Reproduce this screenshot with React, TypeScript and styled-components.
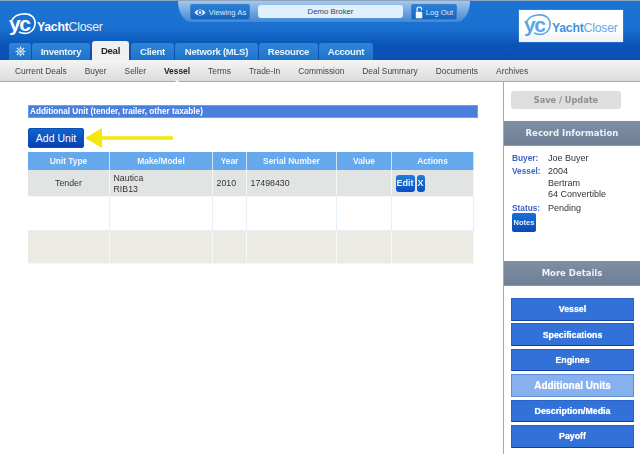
import React from "react";
import styled, { createGlobalStyle } from "styled-components";

const Global = createGlobalStyle`
  html, body { margin: 0; padding: 0; background: #fff; }
  body { font-family: "Liberation Sans", Arial, sans-serif; color: #333; }
  * { box-sizing: border-box; }
`;

const Page = styled.div`
  width: 640px;
  height: 454px;
  overflow: hidden;
  display: flex;
  flex-direction: column;
  filter: blur(0.35px);
`;

const Header = styled.header`
  height: 60px;
  flex: none;
  display: flex;
  flex-direction: column;
  border-top: 1px solid #8fa3bd;
  background: linear-gradient(#1a74d4 0%, #1a70d0 45%, #0a54b8 75%, #0a4fb2 100%);
`;

const TopRow = styled.div`
  height: 42px;
  flex: none;
  display: flex;
  align-items: flex-start;
`;

const LogoBox = styled.div<{ $boxed?: boolean }>`
  display: flex;
  align-items: center;
  color: ${(p) => (p.$boxed ? "#5aa5e8" : "#fff")};
  ${(p) =>
    p.$boxed
      ? `width: 104px; height: 32px; margin: 9px 0 0 49px; padding-left: 5px; background: linear-gradient(#fff 60%, #eef1f5); box-shadow: 0 0 1px #9dbde0;`
      : `width: 169px; height: 26px; margin: 11px 0 0 9px;`}
`;

const LogoMark = styled.div`
  position: relative;
  width: 27px;
  height: 24px;
  flex: none;
`;

const MarkRing = styled.svg`
  position: absolute;
  inset: 0;
`;

const MarkText = styled.span`
  position: absolute;
  left: 0;
  top: -1px;
  font: bold 21px/24px "Liberation Sans", sans-serif;
  letter-spacing: -1.5px;
`;

const LogoWord = styled.span<{ $boxed?: boolean }>`
  font-size: 12.3px;
  margin: 3px 0 0 1px;
  letter-spacing: -0.25px;
  color: ${(p) => (p.$boxed ? "#6aa8e2" : "#e6f0fb")};
`;

const WordStrong = styled.b<{ $boxed?: boolean }>`
  font-weight: bold;
  color: ${(p) => (p.$boxed ? "#3f93e0" : "#fff")};
`;

const TopPanel = styled.div`
  width: 292px;
  height: 21px;
  flex: none;
  display: flex;
  align-items: flex-start;
  padding: 3px 0 0 12px;
  background: linear-gradient(#a4c8ec, #3f87d6);
  border-radius: 0 0 14px 14px / 0 0 22px 22px;
`;

const TopButton = styled.div<{ $w: number }>`
  width: ${(p) => p.$w}px;
  height: 16px;
  flex: none;
  display: flex;
  align-items: center;
  justify-content: center;
  gap: 3px;
  font-size: 7.7px;
  color: #dbeafa;
  border-radius: 3px;
  background: linear-gradient(#2c82d8, #1362bd);
  box-shadow: inset 0 0 0 1px #3a7fc8;
`;

const NameField = styled.div`
  width: 145px;
  height: 13px;
  margin: 1px 8px 0;
  flex: none;
  font-size: 7.8px;
  line-height: 13px;
  text-align: center;
  color: #34475a;
  background: #e0f0fc;
  border-radius: 3px;
`;

const Tabs = styled.nav`
  display: flex;
  align-items: flex-end;
  height: 17px;
  padding-left: 9px;
  gap: 1px;
  flex: none;
`;

const Tab = styled.div<{ $w: number; $active?: boolean }>`
  width: ${(p) => p.$w}px;
  height: ${(p) => (p.$active ? 19 : 17)}px;
  margin: ${(p) => (p.$active ? "0 1px" : "0")};
  flex: none;
  display: flex;
  align-items: center;
  justify-content: center;
  font-size: 9.6px;
  letter-spacing: -0.3px;
  font-weight: bold;
  color: ${(p) => (p.$active ? "#222" : "#eaf3fc")};
  border-radius: 3px 3px 0 0;
  background: ${(p) => (p.$active ? "#f0f0f0" : "linear-gradient(#2f86d8, #1c73cb)")};
`;

const SubNav = styled.nav`
  position: relative;
  height: 22px;
  flex: none;
  display: flex;
  align-items: center;
  padding-left: 15px;
  gap: 18px;
  font-size: 8.4px;
  color: #444;
  background: linear-gradient(#f4f4f4, #dcdcdc);
  border-bottom: 1px solid #a9a9a9;
`;

const SubItem = styled.span<{ $active?: boolean }>`
  position: relative;
  font-weight: ${(p) => (p.$active ? "bold" : "normal")};
  color: ${(p) => (p.$active ? "#222" : "#444")};
  &::after {
    content: ${(p) => (p.$active ? '""' : "none")};
    position: absolute;
    left: 50%;
    bottom: -7px;
    margin-left: -3px;
    border: 3px solid transparent;
    border-top: 0;
    border-bottom-color: #fff;
  }
`;

const Body = styled.div`
  flex: 1;
  display: flex;
  min-height: 0;
`;

const Main = styled.main`
  width: 503px;
  flex: none;
  padding: 23px 0 0 28px;
`;

const SectionBar = styled.div`
  width: 450px;
  height: 13px;
  font-size: 8.2px;
  font-weight: bold;
  line-height: 11px;
  padding-left: 1px;
  color: #fff;
  background: #4a7fdc;
  border: 1px solid #6f9ef0;
`;

const AddRow = styled.div`
  position: relative;
  margin: 10px 0 4px;
  height: 20px;
`;

const AddButton = styled.div`
  width: 56px;
  height: 20px;
  display: flex;
  align-items: center;
  justify-content: center;
  font-size: 10.5px;
  color: #fff;
  border-radius: 3px;
  background: linear-gradient(#0e66d0, #0a3fae);
  box-shadow: inset 0 0 0 1px #0d4db8;
`;

const Arrow = styled.svg`
  position: absolute;
  left: 57px;
  top: 0;
`;

const Grid = styled.div`
  width: 446px;
  display: grid;
  grid-template-columns: 82px 103px 34px 90px 55px 82px;
  grid-template-rows: 18px 27px 34px 33px;
`;

const Head = styled.div`
  display: flex;
  align-items: center;
  justify-content: center;
  font-size: 8.4px;
  font-weight: bold;
  color: #f2f7fd;
  background: #66a8ec;
  border-right: 1px solid #cfe3f8;
`;

const Cell = styled.div<{ $bg: string; $line: string; $center?: boolean }>`
  display: flex;
  flex-direction: column;
  justify-content: center;
  align-items: ${(p) => (p.$center ? "center" : "flex-start")};
  padding: 1px 0 0 ${(p) => (p.$center ? 0 : 3.5)}px;
  font-size: 8.8px;
  line-height: 11px;
  color: #333;
  background: ${(p) => p.$bg};
  border-right: 1px solid ${(p) => p.$line};
  border-bottom: 1px solid ${(p) => p.$line};
`;

const ActionWrap = styled.div`
  display: flex;
  gap: 2px;
`;

const SmallButton = styled.div<{ $w: number }>`
  width: ${(p) => p.$w}px;
  height: 17px;
  display: flex;
  align-items: center;
  justify-content: center;
  font-size: 9px;
  font-weight: bold;
  color: #e8f2fd;
  border-radius: 3px;
  background: linear-gradient(#1b7fdc, #0a4fc0);
`;

const Side = styled.aside`
  flex: 1;
  border-left: 1px solid #a8a8a8;
`;

const SaveButton = styled.div`
  width: 110px;
  height: 18px;
  margin: 9px 0 12px 7px;
  display: flex;
  align-items: center;
  justify-content: center;
  font: bold 8.2px "DejaVu Sans", sans-serif;
  color: #8f8f8f;
  background: #dedede;
  border-radius: 3px;
`;

const SideHead = styled.div`
  height: 25px;
  display: flex;
  align-items: center;
  justify-content: center;
  font: bold 8.5px "DejaVu Sans", sans-serif;
  color: #eef1f5;
  background: linear-gradient(#7e8ea3, #6f7f96);
  border-bottom: 1px solid #8e98a6;
`;

const InfoBox = styled.div`
  height: 115px;
  padding: 6.5px 0 0 8px;
`;

const InfoRow = styled.div`
  display: grid;
  grid-template-columns: 36px 1fr;
  font-size: 9px;
  line-height: 11.7px;
  margin-bottom: 1.6px;
  color: #333;
`;

const InfoLabel = styled.span`
  font-size: 8.3px;
  font-weight: bold;
  color: #3b62cc;
`;

const NotesButton = styled.div`
  width: 24px;
  height: 19px;
  margin-top: -3px;
  display: flex;
  align-items: center;
  justify-content: center;
  font-size: 7.5px;
  font-weight: bold;
  color: #e8f2fd;
  border-radius: 2px;
  background: linear-gradient(#1673d8, #0a49b8);
`;

const DetailList = styled.div`
  display: flex;
  flex-direction: column;
  gap: 2.8px;
  padding: 12px 0 0 7px;
`;

const DetailButton = styled.div<{ $active?: boolean }>`
  width: 123px;
  height: 22.6px;
  display: flex;
  align-items: center;
  justify-content: center;
  font-size: ${(p) => (p.$active ? 10 : 8.8)}px;
  font-weight: bold;
  color: #fff;
  text-shadow: 0 0 1px #dfe8fa;
  background: ${(p) => (p.$active ? "#86b0ee" : "#3272d8")};
  border: 1px solid ${(p) => (p.$active ? "#5f8fd8" : "#2a62c8")};
  border-bottom: 1px solid ${(p) => (p.$active ? "#5f8fd8" : "#0f3fa8")};
`;

const Logo = ({ boxed }: { boxed?: boolean }) => (
  <LogoBox $boxed={boxed}>
    <LogoMark>
      <MarkRing width="28" height="24" viewBox="0 0 28 24" fill="none">
        <path d="M3 7 C7 0 19 -1 24 4 C28 9 26 18 19 20 C15 21 12 20 10 19" stroke={boxed ? "#5aa5e8" : "#fff"} strokeWidth="1.6" />
      </MarkRing>
      <MarkText>yc</MarkText>
    </LogoMark>
    <LogoWord $boxed={boxed}>
      <WordStrong $boxed={boxed}>Yacht</WordStrong>Closer
    </LogoWord>
  </LogoBox>
);

const GearIcon = () => (
  <svg width="11" height="11" viewBox="0 0 24 24" fill="none" stroke="#dbe9f8" strokeWidth="2.4">
    <circle cx="12" cy="12" r="6" />
    <circle cx="12" cy="12" r="2" />
    <path d="M12 1v5M12 18v5M1 12h5M18 12h5M4 4l4 4M16 16l4 4M20 4l-4 4M8 16l-4 4" />
  </svg>
);

const EyeIcon = () => (
  <svg width="12" height="9" viewBox="0 0 24 18">
    <path d="M1 9 C6 1 18 1 23 9 C18 17 6 17 1 9Z" fill="#e8f3fd" />
    <circle cx="12" cy="9" r="5" fill="#1c6cc6" />
    <circle cx="12" cy="9" r="2.6" fill="#e8f3fd" />
  </svg>
);

const LockIcon = () => (
  <svg width="8" height="13" viewBox="0 0 12 20" fill="none">
    <path d="M3 9V5a3.5 3.5 0 0 1 7 0v1" stroke="#f2f8fe" strokeWidth="1.8" />
    <rect x="1" y="9" width="10" height="10" rx="1.5" fill="#f2f8fe" />
  </svg>
);

const tabs: [string, number][] = [
  ["Inventory", 58],
  ["Deal", 37],
  ["Client", 43],
  ["Network (MLS)", 83],
  ["Resource", 59],
  ["Account", 54],
];
const subs = ["Current Deals", "Buyer", "Seller", "Vessel", "Terms", "Trade-In", "Commission", "Deal Summary", "Documents", "Archives"];
const heads = ["Unit Type", "Make/Model", "Year", "Serial Number", "Value", "Actions"];
const details = ["Vessel", "Specifications", "Engines", "Additional Units", "Description/Media", "Payoff"];

const blank = [0, 1, 2, 3, 4, 5];

export default function App() {
  return (
    <Page>
      <Global />
      <Header>
        <TopRow>
          <Logo />
          <TopPanel>
            <TopButton $w={60}><EyeIcon />Viewing As</TopButton>
            <NameField>Demo Broker</NameField>
            <TopButton $w={46}><LockIcon />Log Out</TopButton>
          </TopPanel>
          <Logo boxed />
        </TopRow>
        <Tabs>
          <Tab $w={22}><GearIcon /></Tab>
          {tabs.map(([t, w]) => (
            <Tab key={t} $w={w} $active={t === "Deal"}>{t}</Tab>
          ))}
        </Tabs>
      </Header>
      <SubNav>
        {subs.map((s) => (
          <SubItem key={s} $active={s === "Vessel"}>{s}</SubItem>
        ))}
      </SubNav>
      <Body>
        <Main>
          <SectionBar>Additional Unit (tender, trailer, other taxable)</SectionBar>
          <AddRow>
            <AddButton>Add Unit</AddButton>
            <Arrow width="90" height="20" viewBox="0 0 90 20">
              <path d="M0 10 L17 0 V8.2 H88 V11.8 H17 V20 Z" fill="#f4e80a" />
            </Arrow>
          </AddRow>
          <Grid>
            {heads.map((h) => <Head key={h}>{h}</Head>)}
            <Cell $bg="#e2e4e4" $line="#f4f6f8" $center>Tender</Cell>
            <Cell $bg="#e2e4e4" $line="#f4f6f8"><span>Nautica</span><span>RIB13</span></Cell>
            <Cell $bg="#e2e4e4" $line="#f4f6f8">2010</Cell>
            <Cell $bg="#e2e4e4" $line="#f4f6f8">17498430</Cell>
            <Cell $bg="#e2e4e4" $line="#f4f6f8" />
            <Cell $bg="#e2e4e4" $line="#f4f6f8">
              <ActionWrap>
                <SmallButton $w={19}>Edit</SmallButton>
                <SmallButton $w={8}>X</SmallButton>
              </ActionWrap>
            </Cell>
            {blank.map((i) => <Cell key={`w${i}`} $bg="#fff" $line="#e6f0fb" />)}
            {blank.map((i) => <Cell key={`b${i}`} $bg="#ecebe3" $line="#f7f7f3" />)}
          </Grid>
        </Main>
        <Side>
          <SaveButton>Save / Update</SaveButton>
          <SideHead>Record Information</SideHead>
          <InfoBox>
            <InfoRow><InfoLabel>Buyer:</InfoLabel><span>Joe Buyer</span></InfoRow>
            <InfoRow><InfoLabel>Vessel:</InfoLabel><span>2004<br />Bertram<br />64 Convertible</span></InfoRow>
            <InfoRow><InfoLabel>Status:</InfoLabel><span>Pending</span></InfoRow>
            <NotesButton>Notes</NotesButton>
          </InfoBox>
          <SideHead>More Details</SideHead>
          <DetailList>
            {details.map((d) => (
              <DetailButton key={d} $active={d === "Additional Units"}>{d}</DetailButton>
            ))}
          </DetailList>
        </Side>
      </Body>
    </Page>
  );
}
